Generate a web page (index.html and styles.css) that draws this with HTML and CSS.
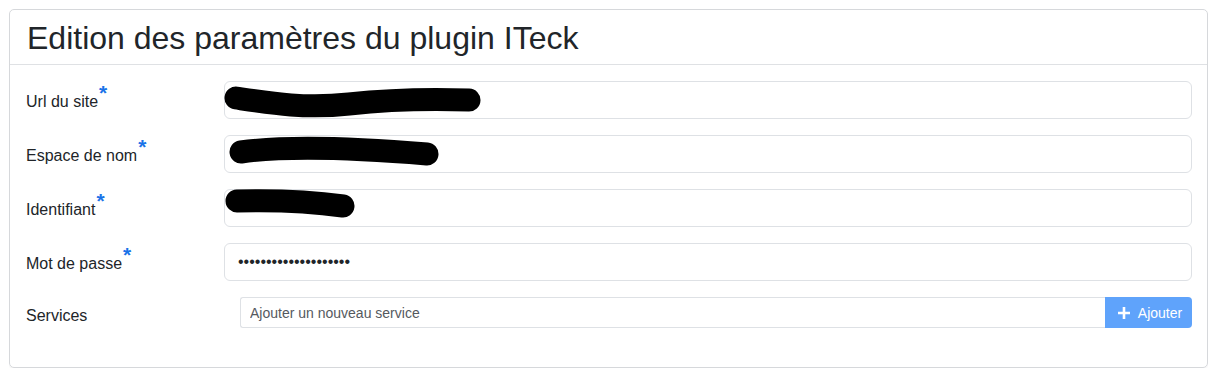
FILE: index.html
```html
<!DOCTYPE html>
<html lang="fr">
<head>
    <meta charset="UTF-8">
    <title>Edition des paramètres du plugin ITeck</title>
    <link rel="stylesheet" href="styles.css">
</head>
<body>
    <div class="card">
        <div class="card-header">
            <h1>Edition des paramètres du plugin ITeck</h1>
        </div>
        <form class="card-body">
            <div class="form-row">
                <label for="url">Url du site<sup>*</sup></label>
                <div class="field">
                    <input type="text" id="url">
                    <svg class="scribble" viewBox="0 0 968 38" preserveAspectRatio="xMinYMin meet">
                        <path d="M12,17 C45,22 80,28 125,23 S215,18 245,19" />
                    </svg>
                </div>
            </div>
            <div class="form-row">
                <label for="namespace">Espace de nom<sup>*</sup></label>
                <div class="field">
                    <input type="text" id="namespace">
                    <svg class="scribble" viewBox="0 0 968 38" preserveAspectRatio="xMinYMin meet">
                        <path d="M17,17 C60,11 130,13 203,19" />
                    </svg>
                </div>
            </div>
            <div class="form-row">
                <label for="login">Identifiant<sup>*</sup></label>
                <div class="field">
                    <input type="text" id="login">
                    <svg class="scribble" viewBox="0 0 968 38" preserveAspectRatio="xMinYMin meet">
                        <path d="M13,12 C50,11 90,13 119,17" />
                    </svg>
                </div>
            </div>
            <div class="form-row">
                <label for="password">Mot de passe<sup>*</sup></label>
                <div class="field">
                    <input type="password" id="password" value="motdepasse123456789a">
                </div>
            </div>
            <div class="form-row services">
                <label for="service">Services</label>
                <div class="input-group">
                    <input type="text" id="service" placeholder="Ajouter un nouveau service">
                    <button type="button">
                        <svg viewBox="0 0 14 14" width="14" height="14"><path d="M7 1v12M1 7h12" /></svg>
                        Ajouter
                    </button>
                </div>
            </div>
        </form>
    </div>
</body>
</html>
```

FILE: styles.css
```css
body {
    margin: 9px 8px 0 9px;
    font-family: "Liberation Sans", Arial, sans-serif;
    color: #212529;
    background: #fff;
}
.card {
    border: 1px solid #d6d8db;
    border-radius: 5px;
    box-shadow: 0 1px 2px rgba(0,0,0,0.06);
}
.card-header {
    height: 54px;
    border-bottom: 1px solid #dfe1e4;
    padding: 0 17px;
    display: flex;
    align-items: center;
}
h1 {
    margin: 0;
    font-size: 32px;
    font-weight: 400;
    line-height: 1;
    padding-top: 2px;
}
.card-body {
    padding: 16px 15px 39px 16px;
    display: flex;
    flex-direction: column;
    gap: 16px;
}
.form-row {
    display: grid;
    grid-template-columns: 198px 1fr;
    align-items: center;
}
label {
    font-size: 16px;
    padding-top: 3px;
}
sup {
    color: #1a73e8;
    font-size: 21px;
    font-weight: 700;
    line-height: 0;
    position: relative;
    top: 0;
    margin-left: 1px;
}
.field {
    position: relative;
}
input {
    box-sizing: border-box;
    width: 100%;
    height: 38px;
    border: 1px solid #dee1e5;
    border-radius: 6px;
    padding: 0 12px;
    font-family: inherit;
    font-size: 16px;
    color: #212529;
    outline: none;
}
input[type="password"] {
    padding-left: 13px;
}
.scribble {
    position: absolute;
    left: 0;
    top: 0;
    width: 968px;
    height: 38px;
    overflow: visible;
}
.scribble path {
    fill: none;
    stroke: #000;
    stroke-width: 23;
    stroke-linecap: round;
}
.services {
    grid-template-columns: 214px 1fr;
}
.services label {
    padding-top: 6px;
}
.input-group {
    display: flex;
    height: 31px;
}
.input-group input {
    height: 31px;
    flex: 1;
    border-radius: 3px 0 0 3px;
    border-right: none;
    padding: 0 9px;
    font-size: 14px;
}
.input-group input::placeholder {
    color: #55595e;
}
button {
    width: 87px;
    border: none;
    border-radius: 0 4px 4px 0;
    background: #5fa3fb;
    color: #fff;
    font-family: inherit;
    font-size: 14px;
    display: flex;
    align-items: center;
    justify-content: center;
    gap: 7px;
    padding: 0 0 0 2px;
}
button svg path {
    stroke: #fff;
    stroke-width: 2.6;
}
```
